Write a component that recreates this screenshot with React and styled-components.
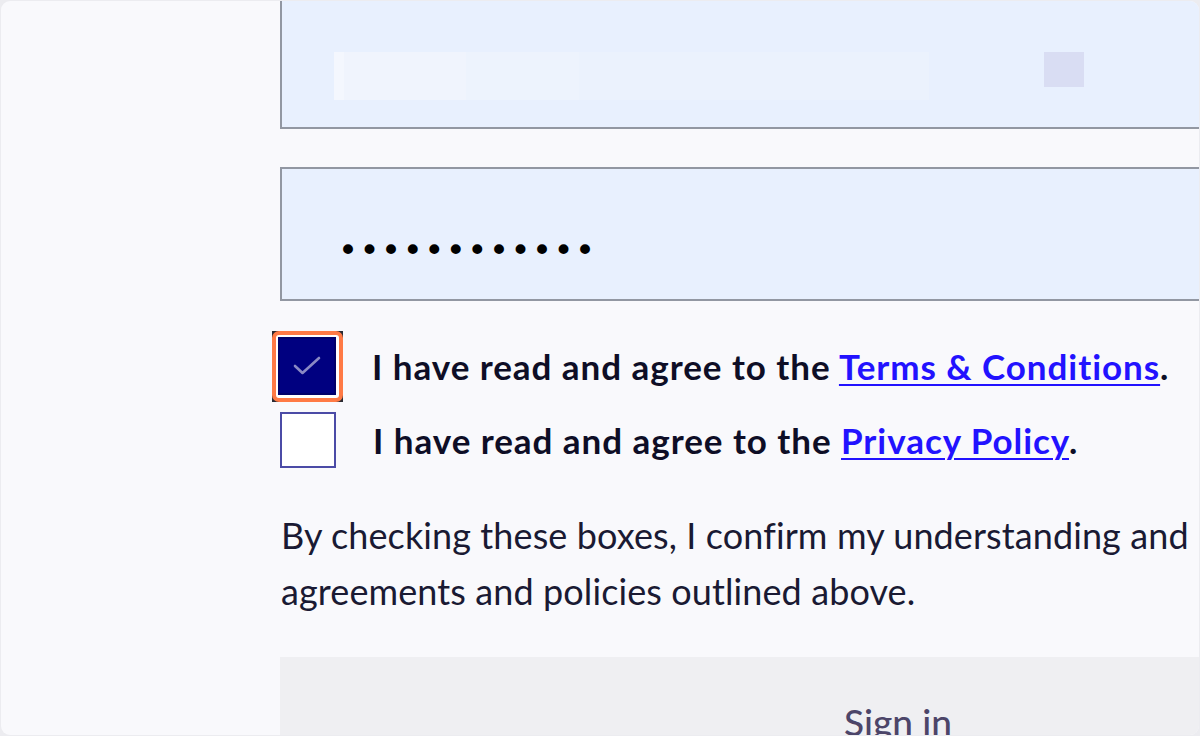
import React from "react";
import styled, { createGlobalStyle } from "styled-components";

const Global = createGlobalStyle`
  html, body { margin: 0; padding: 0; }
  body {
    width: 1200px;
    height: 736px;
    overflow: hidden;
    background: #ececf0;
    font-family: Lato, "Noto Sans", sans-serif;
  }
`;

const Frame = styled.div`
  width: 1200px;
  height: 736px;
  box-sizing: border-box;
  padding: 1px;
  background: #ececf0;
`;

const Panel = styled.div`
  width: 100%;
  height: 100%;
  border-radius: 9px;
  background: #f9f9fc;
  overflow: hidden;
`;

const Column = styled.div`
  margin-left: 279px;
  margin-top: -6px;
  width: 1000px;
  display: flex;
  flex-direction: column;
`;

const Field = styled.div`
  box-sizing: border-box;
  height: 134px;
  background: #e8f0fe;
  border: 2px solid #9297a2;
  border-right: none;
  display: flex;
  align-items: center;
  padding-left: 52px;
  margin-bottom: ${(p) => p.$mb || 0}px;
`;

const Blur = styled.span`
  display: inline-block;
  height: ${(p) => p.$h || 48}px;
  width: ${(p) => p.$w}px;
  background: ${(p) => p.$c};
  margin-left: ${(p) => p.$ml || 0}px;
  align-self: ${(p) => p.$self || "center"};
`;

const Redacted = styled.div`
  display: flex;
  align-items: flex-start;
  height: 48px;
  margin-top: 28px;
`;

const Dots = styled.span`
  font-family: "DejaVu Sans", sans-serif;
  font-size: 34px;
  letter-spacing: 1.5px;
  color: #000;
  margin-top: 32px;
  margin-left: 4px;
`;

const Checks = styled.div`
  display: flex;
  flex-direction: column;
  gap: 18px;
  margin-top: 37px;
`;

const Row = styled.label`
  display: flex;
  align-items: center;
  gap: 37px;
  height: 56px;
`;

const FocusFrame = styled.span`
  display: inline-flex;
  margin: -8px;
  background: #2b2b33;
`;

const Ring = styled.span`
  display: inline-flex;
  border: 4px solid #ff7a45;
  border-radius: 7px;
  background: #fff;
  padding: 3px;
`;

const Box = styled.span`
  box-sizing: border-box;
  width: ${(p) => (p.$checked ? 58 : 56)}px;
  height: ${(p) => (p.$checked ? 58 : 56)}px;
  flex: none;
  display: inline-flex;
  align-items: center;
  justify-content: center;
  background: ${(p) => (p.$checked ? "#000080" : "#ffffff")};
  border: 2px solid ${(p) => (p.$checked ? "#00006a" : "#4b4ba6")};
  margin: ${(p) => (p.$checked ? "-1px" : "0")} 0 0 ${(p) => (p.$checked ? "-1px" : "0")};
`;

const Label = styled.span`
  font-family: Lato, "Noto Sans", sans-serif;
  font-weight: 700;
  font-size: 35px;
  letter-spacing: 0.95px;
  color: #0e0e26;
  white-space: nowrap;
`;

const Link = styled.a`
  color: #2212ff;
  text-decoration: underline;
  text-underline-offset: 4px;
  text-decoration-thickness: 2px;
`;

const Note = styled.p`
  margin: 39px 0 0 1px;
  font-family: Lato, "Noto Sans", sans-serif;
  font-size: 36px;
  line-height: 56px;
  letter-spacing: 0.1px;
  color: #1a1a33;
  width: 925px;
`;

const Button = styled.button`
  margin-top: 38px;
  height: 140px;
  width: 1000px;
  border: none;
  background: #efeff2;
  display: flex;
  justify-content: center;
  align-items: flex-start;
  padding: 42px 0 0 236px;
  font-family: Lato, "Noto Sans", sans-serif;
  font-size: 37px;
  font-weight: 500;
  color: #4c4569;
`;

function CheckMark() {
  return (
    <svg width="30" height="30" viewBox="0 0 30 30" fill="none">
      <path d="M3 15 L10.5 22 L27 7" stroke="#8a89c4" strokeWidth="2.6" strokeLinecap="round" strokeLinejoin="round" />
    </svg>
  );
}

export default function App() {
  return (
    <>
      <Global />
      <Frame>
        <Panel>
          <Column>
            <Field $mb={38}>
              <Redacted>
                <Blur $w={10} $c="#f4f7fe" />
                <Blur $w={122} $c="#f0f4fd" />
                <Blur $w={113} $c="#edf3fd" />
                <Blur $w={350} $c="#ebf2fd" />
                <Blur $w={40} $h={35} $c="#d9ddf3" $ml={115} $self="flex-start" />
              </Redacted>
            </Field>
            <Field>
              <Dots>••••••••••••</Dots>
            </Field>
            <Checks>
              <Row>
                <FocusFrame>
                  <Ring>
                    <Box $checked>
                      <CheckMark />
                    </Box>
                  </Ring>
                </FocusFrame>
                <Label>
                  I have read and agree to the <Link href="#">Terms &amp; Conditions</Link>.
                </Label>
              </Row>
              <Row>
                <Box />
                <Label>
                  I have read and agree to the <Link href="#">Privacy Policy</Link>.
                </Label>
              </Row>
            </Checks>
            <Note>
              By checking these boxes, I confirm my understanding and agreements and policies outlined above.
            </Note>
            <Button>Sign in</Button>
          </Column>
        </Panel>
      </Frame>
    </>
  );
}
